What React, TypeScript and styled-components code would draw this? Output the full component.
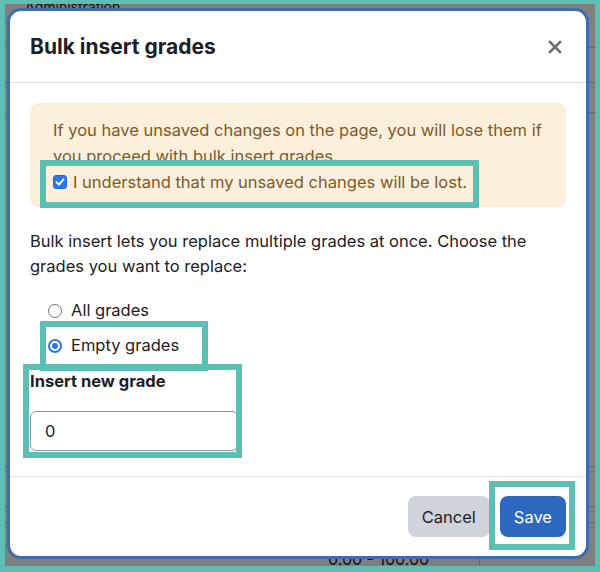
import React from "react";
import styled, { createGlobalStyle } from "styled-components";

const TEAL = "#5bc0b3";

const GlobalStyle = createGlobalStyle`
  html, body {
    margin: 0;
    padding: 0;
    background: ${TEAL};
  }
  body {
    font-family: Inter, "Noto Sans", "Liberation Sans", sans-serif;
    -webkit-font-smoothing: antialiased;
  }
`;

// Outer screenshot frame
const Frame = styled.div`
  width: 600px;
  height: 572px;
  box-sizing: border-box;
  padding: 4px 5px 6px 5px;
  background: ${TEAL};
`;

const Viewport = styled.div`
  position: relative;
  width: 100%;
  height: 100%;
  overflow: hidden;
  background: #fff;
`;

// Page behind the dialog
const Page = styled.div`
  position: absolute;
  inset: 0;
  display: flex;
  flex-direction: column;
  background: #fff;
  color: #1d2125;
  font-size: 15px;
`;

const Crumb = styled.div`
  margin: -4px 0 0 20px;
  height: 14px;
  line-height: 14px;
  font-size: 14px;
`;

const TableLine = styled.div<{ $h: number }>`
  flex-shrink: 0;
  box-sizing: border-box;
  height: ${(p) => p.$h}px;
  border-bottom: 1px solid #c9cdd2;
`;

const BottomRow = styled.div`
  display: flex;
  flex: 1;
`;

const RangeCell = styled.div`
  width: 475px;
  box-sizing: border-box;
  padding: 26px 0 0 323px;
  border-right: 1px solid #c9cdd2;
  font-size: 16px;
  line-height: 20px;
  white-space: nowrap;
`;

const Backdrop = styled.div`
  position: absolute;
  inset: 0;
  background: rgba(0, 0, 0, 0.5);
`;

// Dialog
const Modal = styled.div`
  position: absolute;
  top: 4px;
  left: 2px;
  right: 6px;
  bottom: 7px;
  box-sizing: border-box;
  display: flex;
  flex-direction: column;
  background: #fff;
  border: 3px solid #3d6cb3;
  border-radius: 14px;
  color: #1d2125;
  font-size: 16.5px;
`;

const Header = styled.div`
  display: flex;
  align-items: center;
  justify-content: space-between;
  height: 72px;
  box-sizing: border-box;
  padding: 0 20px;
  border-bottom: 1px solid #dee2e6;
`;

const Title = styled.h2`
  margin: 0;
  font-size: 21px;
  font-weight: 700;
  line-height: 24px;
  color: #1d2125;
`;

const CloseButton = styled.button`
  display: flex;
  padding: 0;
  margin-right: 4px;
  border: none;
  background: none;
  cursor: pointer;
`;

const Body = styled.div`
  flex: 1;
  padding: 20px 20px 0;
`;

const Alert = styled.div`
  padding: 14px 20px 12px 23px;
  border-radius: 8px;
  background: #fcefdc;
  color: #7d5a29;
  line-height: 26px;
`;

const AlertText = styled.p`
  margin: 0;
`;

const CheckRow = styled.label`
  display: flex;
  align-items: center;
  gap: 6px;
`;

const CheckBox = styled.span`
  display: flex;
  align-items: center;
  justify-content: center;
  width: 14px;
  height: 14px;
  box-sizing: border-box;
  border-radius: 3px;
  background: #2b76f0;
  border: 1px solid #2466d4;
`;

const Intro = styled.p`
  margin: 22px 0 0;
  line-height: 25px;
`;

const RadioGroup = styled.div`
  display: flex;
  flex-direction: column;
  gap: 10px;
  margin-top: 19px;
  padding-left: 18px;
`;

const RadioRow = styled.label`
  display: flex;
  align-items: center;
  gap: 9px;
  line-height: 25px;
`;

const Radio = styled.span<{ $checked?: boolean }>`
  position: relative;
  width: 14px;
  height: 14px;
  box-sizing: border-box;
  border-radius: 50%;
  background: #fff;
  border: ${(p) => (p.$checked ? "2px solid #2b76f0" : "1px solid #767676")};
  &::after {
    content: "";
    display: ${(p) => (p.$checked ? "block" : "none")};
    position: absolute;
    top: 2px;
    left: 2px;
    width: 6px;
    height: 6px;
    border-radius: 50%;
    background: #2b76f0;
  }
`;

const FieldLabel = styled.div`
  margin-top: 11px;
  font-weight: 700;
  line-height: 25px;
`;

const GradeInput = styled.input`
  display: block;
  margin-top: 17px;
  width: 208px;
  height: 40px;
  box-sizing: border-box;
  padding: 0 14px;
  border: 1px solid #8f959e;
  border-radius: 6px;
  font-family: inherit;
  font-size: 16.5px;
  color: #1d2125;
  outline: none;
`;

const Footer = styled.div`
  display: flex;
  justify-content: flex-end;
  gap: 10px;
  padding: 19px 20px;
  border-top: 1px solid #dee2e6;
`;

const Button = styled.button<{ $primary?: boolean }>`
  height: 41px;
  padding: 0 14px;
  border: none;
  border-radius: 8px;
  font-family: inherit;
  font-size: 16.5px;
  cursor: pointer;
  background: ${(p) => (p.$primary ? "#2c68bd" : "#ced4da")};
  color: ${(p) => (p.$primary ? "#fff" : "#1d2125")};
`;

// Teal annotation boxes drawn over the dialog
const Highlight = styled.div<{ $x: number; $y: number; $w: number; $h: number }>`
  position: absolute;
  left: ${(p) => p.$x}px;
  top: ${(p) => p.$y}px;
  width: ${(p) => p.$w}px;
  height: ${(p) => p.$h}px;
  box-sizing: border-box;
  border: 6px solid ${TEAL};
  pointer-events: none;
`;

const lines = [34, 35, 30, 354, 40, 16];

const App = () => {
  return (
    <Frame>
      <GlobalStyle />
      <Viewport>
        <Page>
          <Crumb>Administration</Crumb>
          {lines.map((h, i) => (
            <TableLine key={i} $h={h} />
          ))}
          <BottomRow>
            <RangeCell>0.00 - 100.00</RangeCell>
          </BottomRow>
        </Page>
        <Backdrop />
        <Modal role="dialog">
          <Header>
            <Title>Bulk insert grades</Title>
            <CloseButton aria-label="Close">
              <svg width="14" height="14" viewBox="0 0 14 14">
                <path
                  d="M2 2 L12 12 M12 2 L2 12"
                  stroke="#6a6e73"
                  strokeWidth="2.6"
                  strokeLinecap="square"
                />
              </svg>
            </CloseButton>
          </Header>
          <Body>
            <Alert>
              <AlertText>
                If you have unsaved changes on the page, you will lose them if
                you proceed with bulk insert grades.
              </AlertText>
              <CheckRow>
                <CheckBox>
                  <svg width="10" height="10" viewBox="0 0 10 10">
                    <path
                      d="M1.6 5.2 L4 7.6 L8.5 2.4"
                      fill="none"
                      stroke="#fff"
                      strokeWidth="2"
                      strokeLinecap="round"
                      strokeLinejoin="round"
                    />
                  </svg>
                </CheckBox>
                I understand that my unsaved changes will be lost.
              </CheckRow>
            </Alert>
            <Intro>
              Bulk insert lets you replace multiple grades at once. Choose the
              grades you want to replace:
            </Intro>
            <RadioGroup>
              <RadioRow>
                <Radio />
                All grades
              </RadioRow>
              <RadioRow>
                <Radio $checked />
                Empty grades
              </RadioRow>
            </RadioGroup>
            <FieldLabel>Insert new grade</FieldLabel>
            <GradeInput defaultValue="0" />
          </Body>
          <Footer>
            <Button>Cancel</Button>
            <Button $primary>Save</Button>
          </Footer>
          <Highlight $x={30} $y={149} $w={439} $h={48} />
          <Highlight $x={30} $y={310} $w={168} $h={50} />
          <Highlight $x={13} $y={353} $w={219} $h={94} />
          <Highlight $x={479} $y={470} $w={86} $h={69} />
        </Modal>
      </Viewport>
    </Frame>
  );
};

export default App;
